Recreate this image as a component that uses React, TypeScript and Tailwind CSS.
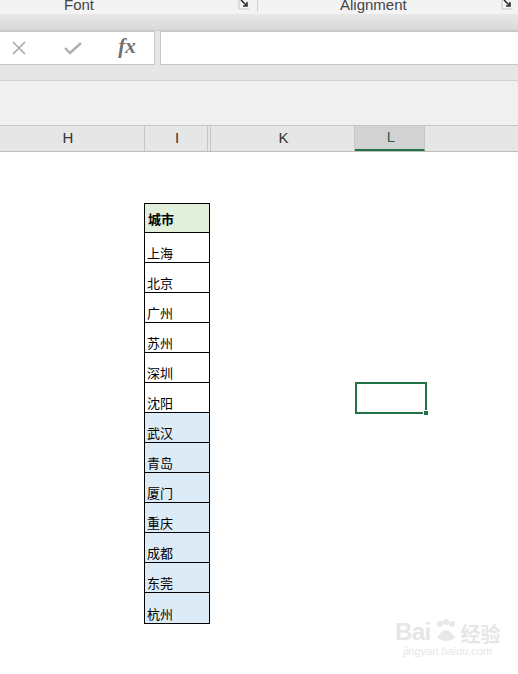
import React from 'react';

const cities = ['上海', '北京', '广州', '苏州', '深圳', '沈阳', '武汉', '青岛', '厦门', '重庆', '成都', '东莞', '杭州'];

// launcher glyph in the ribbon group corner
function Launcher() {
  return (
    <svg width="12" height="11" viewBox="0 0 12 11" className="block">
      <path d="M1 0 V10 H11" fill="none" stroke="#c8c8c8" strokeWidth="1" />
      <path d="M3 1 L9 7 M9 3 V7 H5" fill="none" stroke="#333" strokeWidth="1.6" />
    </svg>
  );
}

function ColHead({ label, width, selected, extra }: { label: string; width: string; selected?: boolean; extra?: string }) {
  return (
    <div
      className={`${width} h-full flex items-center justify-center border-r border-[#c6c6c6] ${extra ?? ''} ${
        selected ? 'bg-[#d2d2d2] text-[#2b5f41] border-b-2 border-b-[#217346]' : 'text-[#333]'
      }`}
    >
      {label}
    </div>
  );
}

export default function App() {
  return (
    <div className="w-[518px] h-[674px] overflow-hidden bg-white relative" style={{ fontFamily: '"Liberation Sans", "Noto Sans CJK SC", sans-serif' }}>
      {/* Ribbon bottom: group labels */}
      <div className="h-[14px] bg-[#f3f3f3] flex text-[15px] text-[#444] leading-none">
        <div className="w-[257px] flex items-end pr-[7px] relative">
          <span className="absolute left-[64px] -top-[3px]">Font</span>
          <span className="ml-auto mb-[4px]"><Launcher /></span>
        </div>
        <div className="w-px h-[12px] bg-[#d0d0d0]" />
        <div className="flex-1 flex items-end pr-[5px] relative">
          <span className="absolute left-[82px] -top-[3px]">Alignment</span>
          <span className="ml-auto mb-[4px]"><Launcher /></span>
        </div>
      </div>
      <div className="h-[17px] bg-gradient-to-b from-[#e8e8e8] to-[#d9d9d9] border-b border-[#c9c9c9]" />

      {/* Formula bar */}
      <div className="h-[34px] bg-[#e6e6e6] flex items-stretch">
        <div className="w-[155px] bg-white border border-l-0 border-[#c6c6c6] flex items-center">
          <span className="w-[38px] flex justify-center">
            <svg width="16" height="16" viewBox="0 0 16 16">
              <path d="M2 2 L14 14 M14 2 L2 14" stroke="#a8a8a8" strokeWidth="1.6" />
            </svg>
          </span>
          <span className="w-[70px] flex justify-center">
            <svg width="20" height="16" viewBox="0 0 20 16">
              <path d="M2 8 L7 13 L18 3" fill="none" stroke="#b0b0b0" strokeWidth="2.4" />
            </svg>
          </span>
          <span
            className="w-[38px] text-center italic font-bold text-[21px] text-[#707070] -mt-[2px]"
            style={{ fontFamily: '"Liberation Serif", serif' }}
          >
            fx
          </span>
        </div>
        <div className="w-[5px]" />
        <div className="flex-1 bg-white border border-r-0 border-[#c6c6c6]" />
      </div>
      <div className="h-[16px] bg-[#e6e6e6] border-b border-[#d0d0d0]" />
      <div className="h-[45px] bg-[#f0f0f0] border-b border-[#c6c6c6]" />

      {/* Column headers */}
      <div className="h-[26px] bg-[#e6e6e6] border-b border-[#bdbdbd] flex text-[15px]">
        <ColHead label="H" width="w-[145px]" extra="pr-[8px]" />
        <ColHead label="I" width="w-[63px]" extra="pl-[2px]" />
        <div className="w-[3px] h-full border-r border-[#c6c6c6]" />
        <ColHead label="K" width="w-[144px]" extra="pl-[2px]" />
        <ColHead label="L" width="w-[70px]" selected extra="pl-[3px]" />
        <div className="flex-1" />
      </div>

      {/* Grid */}
      <div className="flex">
        <div className="w-[144px]" />
        <div className="w-[66px] mt-[51px] border border-black text-[13px] text-black" style={{ fontFamily: '"Noto Sans CJK SC", sans-serif' }}>
          <div className="h-[29px] bg-[#e2efda] border-b border-black flex items-center pl-[3px] font-bold leading-none">
            城市
          </div>
          {cities.map((c, i) => (
            <div
              key={c}
              className={`h-[30px] flex items-end pl-[2px] pb-[3px] leading-none ${
                i < cities.length - 1 ? 'border-b border-black' : 'h-[29px]'
              } ${i >= 6 ? 'bg-[#ddebf7]' : 'bg-white'}`}
            >
              {c}
            </div>
          ))}
        </div>
        <div className="w-[145px]" />
        <div className="w-[72px] mt-[230px]">
          <div className="h-[32px] border-2 border-[#217346] relative">
            <div className="absolute -right-[4px] -bottom-[4px] w-[6px] h-[6px] bg-[#217346] border border-white" />
          </div>
        </div>
      </div>

      {/* Watermark */}
      <div className="absolute left-[395px] top-[618px] flex flex-col items-center text-[#e6e6e6] leading-none select-none">
        <div className="flex items-end gap-[2px]">
          <span className="text-[24px] font-bold tracking-tight">Bai</span>
          <svg width="26" height="26" viewBox="0 0 26 26">
            <circle cx="7" cy="6" r="3" fill="#e8e8e8" />
            <circle cx="13" cy="4" r="3" fill="#e8e8e8" />
            <circle cx="19" cy="6" r="3" fill="#e8e8e8" />
            <path d="M4 20 Q13 4 22 20 Q13 26 4 20 Z" fill="#e8e8e8" />
          </svg>
          <span className="text-[20px] font-bold" style={{ fontFamily: '"Noto Sans CJK SC", sans-serif' }}>经验</span>
        </div>
        <span className="text-[11px] italic mt-[2px]">jingyan.baidu.com</span>
      </div>
    </div>
  );
}
